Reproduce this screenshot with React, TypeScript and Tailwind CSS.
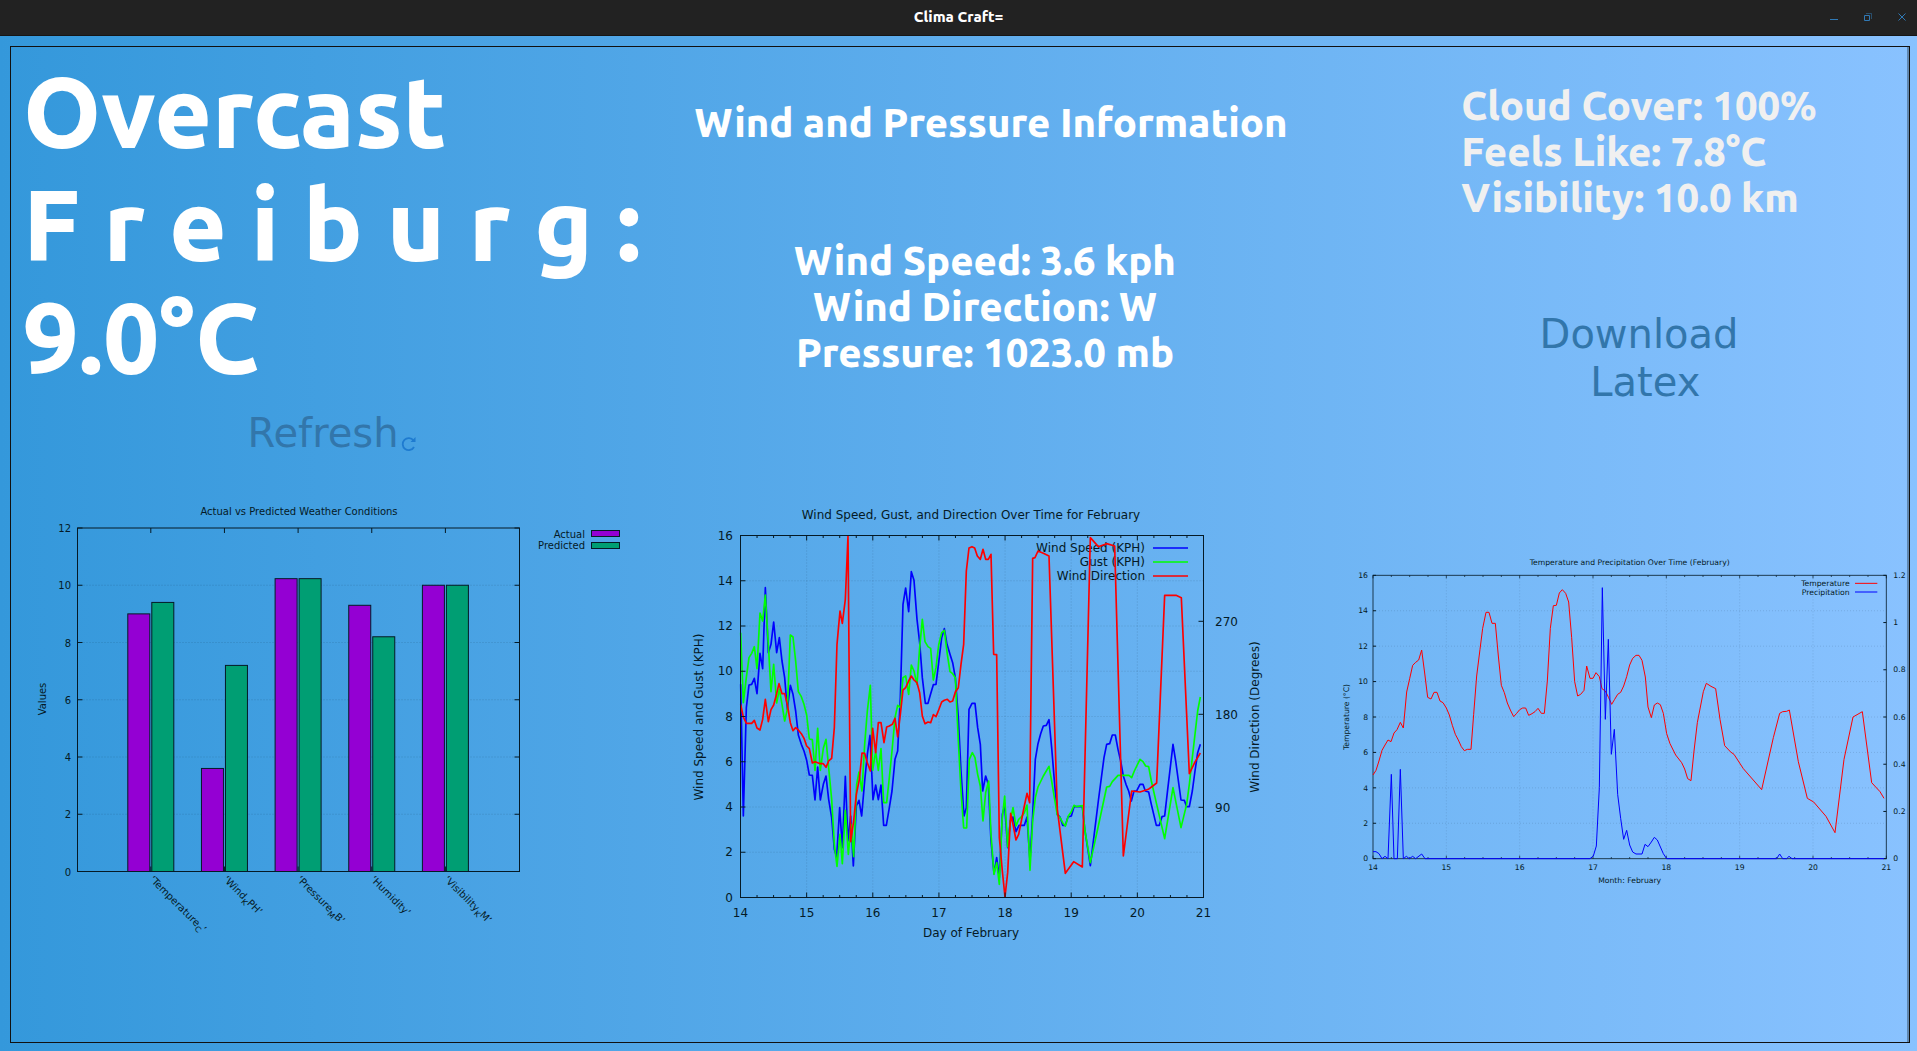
import React from 'react';

const INK = '#051a26';

type LabelProps = {
  x: number;
  y: number;
  size: number;
  anchor?: 'start' | 'middle' | 'end';
  turn?: number;
  children: React.ReactNode;
};

function Label({ x, y, size, anchor = 'middle', turn = 0, children }: LabelProps) {
  return (
    <text
      x={x}
      y={y}
      fontSize={size}
      textAnchor={anchor}
      fill={INK}
      transform={turn ? `rotate(${turn} ${x} ${y})` : undefined}
    >
      {children}
    </text>
  );
}

const range = (n: number) => Array.from({ length: n }, (_, i) => i);

/* ---------- Actual vs predicted bars ---------- */

const bars: { name: React.ReactNode; actual: number; predicted: number }[] = [
  { name: <>‘Temperature<tspan fontSize={8} dy={3}>C</tspan><tspan dy={-3}>’</tspan></>, actual: 9, predicted: 9.4 },
  { name: <>‘Wind<tspan fontSize={8} dy={3}>K</tspan><tspan dy={-3}>PH’</tspan></>, actual: 3.6, predicted: 7.2 },
  { name: <>‘Pressure<tspan fontSize={8} dy={3}>M</tspan><tspan dy={-3}>B’</tspan></>, actual: 10.23, predicted: 10.23 },
  { name: <>‘Humidity’</>, actual: 9.3, predicted: 8.2 },
  { name: <>‘Visibility<tspan fontSize={8} dy={3}>K</tspan><tspan dy={-3}>M’</tspan></>, actual: 10, predicted: 10 },
];

function ConditionsChart() {
  const L = 66.5, R = 508.5, T = 37, B = 380.5;
  const yOf = (v: number) => B - (v * (B - T)) / 12;
  return (
    <svg viewBox="0 0 654 470" className="block w-full" role="img" aria-label="Actual vs Predicted Weather Conditions">
      {range(5).map((i) => (
        <line key={i} x1={L} x2={R} y1={yOf(2 + i * 2)} y2={yOf(2 + i * 2)} stroke={INK} strokeOpacity={0.18} strokeDasharray="1 2" />
      ))}
      {bars.map((b, i) => {
        const c = 139.8 + i * 73.65;
        return (
          <g key={i} stroke={INK}>
            <path d={`M${c} ${T}v5M${c} ${B}v-5`} />
            <rect x={c - 23} y={yOf(b.actual)} width={22} height={B - yOf(b.actual)} fill="#9400d3" />
            <rect x={c + 1} y={yOf(b.predicted)} width={22} height={B - yOf(b.predicted)} fill="#009e73" />
          </g>
        );
      })}
      {bars.map((b, i) => (
        <Label key={i} x={138 + i * 73.65} y={389} size={10} anchor="start" turn={45}>{b.name}</Label>
      ))}
      <rect x={L} y={T} width={R - L} height={B - T} fill="none" stroke={INK} />
      {range(7).map((i) => (
        <g key={i}>
          <path d={`M${L} ${yOf(i * 2)}h5M${R} ${yOf(i * 2)}h-5`} stroke={INK} />
          <Label x={60} y={yOf(i * 2) + 4} size={10} anchor="end">{i * 2}</Label>
        </g>
      ))}
      <Label x={288} y={24} size={10}>Actual vs Predicted Weather Conditions</Label>
      <Label x={35} y={208} size={10} turn={-90}>Values</Label>
      <Label x={574} y={47} size={10} anchor="end">Actual</Label>
      <Label x={574} y={58} size={10} anchor="end">Predicted</Label>
      <rect x={580.5} y={39.5} width={28} height={6} fill="#9400d3" stroke={INK} />
      <rect x={580.5} y={51.5} width={28} height={6} fill="#009e73" stroke={INK} />
    </svg>
  );
}

/* ---------- Wind chart (series are stored at three units per pixel) ---------- */

const windSpeed =
  '182,580 190,975 199,650 207,582 215,580 223,562 231,608 240,487 248,533 256,290 265,485 273,460 281,393 290,485 298,440 306,510 314,560 322,655 331,583 339,610 347,660 355,732 364,760 372,780 380,808 388,852 397,853 405,927 413,828 421,927 430,880 438,855 446,925 455,980 463,1075 470,1098 479,950 487,1070 496,856 504,1050 512,975 520,1125 529,945 537,928 545,975 554,870 562,790 570,733 579,926 587,882 595,926 603,882 611,1003 619,1003 628,950 636,900 645,805 653,780 661,620 669,340 677,291 686,362 694,242 702,268 711,385 719,455 727,560 736,637 744,637 752,608 760,581 768,580 776,515 785,440 793,413 801,460 810,490 818,515 826,560 835,680 843,840 852,975 859,950 867,655 876,637 885,637 893,710 901,760 908,900 917,855 925,880 933,1050 942,1148 950,1100 958,1160 967,970 974,945 983,1070 991,990 999,978 1008,1022 1017,1003 1033,1003 1041,978 1050,1110 1058,970 1066,805 1074,758 1082,728 1090,705 1099,703 1107,686 1115,770 1124,880 1132,970 1140,978 1148,1003 1156,1003 1164,978 1174,975 1182,947 1190,947 1207,947 1215,1020 1231,1124 1255,930 1272,800 1280,760 1289,758 1297,732 1306,732 1314,775 1322,810 1330,855 1338,880 1346,900 1354,930 1362,900 1370,900 1380,880 1389,880 1396,900 1406,903 1414,940 1429,1003 1438,1003 1446,977 1454,975 1462,905 1479,760 1487,810 1503,927 1513,928 1520,947 1528,947 1537,900 1545,840 1553,785 1561,760';
const gust =
  '182,425 190,635 199,560 207,500 215,487 223,467 231,533 240,366 248,390 256,312 265,460 273,602 281,520 290,636 298,595 306,640 314,690 322,655 331,432 339,438 347,510 355,602 364,617 372,640 380,672 388,744 397,746 405,838 413,712 421,838 430,772 438,745 446,830 455,925 463,1060 471,1126 480,1030 487,1118 496,958 505,1090 513,1000 521,1097 530,880 537,843 546,900 554,760 562,660 571,583 578,838 587,782 595,838 603,773 611,935 620,935 628,860 636,780 645,680 653,643 661,650 669,560 677,555 686,610 694,522 702,540 711,580 719,470 727,385 735,452 744,467 752,472 760,567 768,530 776,462 785,425 793,418 802,490 810,542 818,548 826,560 835,750 843,900 851,1011 860,1011 868,805 877,785 885,800 893,850 901,885 909,990 917,905 926,870 933,1030 942,1150 950,1115 958,1180 966,990 974,915 983,1068 991,990 999,950 1008,1005 1016,985 1024,978 1033,965 1041,942 1050,1138 1058,990 1066,920 1074,888 1090,855 1107,826 1115,870 1124,925 1132,972 1140,980 1148,995 1156,1005 1165,975 1174,962 1182,943 1190,947 1207,944 1215,1020 1231,1115 1255,1005 1280,888 1289,886 1297,872 1306,862 1314,853 1347,853 1355,860 1363,840 1380,805 1389,812 1397,825 1406,827 1414,870 1430,940 1454,1043 1479,890 1503,1010 1520,940 1528,880 1537,800 1553,660 1561,618';
const direction =
  '182,640 190,678 199,697 215,697 223,688 231,711 240,717 248,685 256,625 265,692 273,656 281,642 290,608 297,578 306,608 314,608 322,640 331,695 339,719 347,710 355,717 364,728 372,742 380,765 388,773 397,816 405,812 421,818 430,818 438,829 446,810 455,802 463,710 471,460 480,360 487,397 496,325 504,135 508,600 512,1052 521,990 529,910 538,865 546,786 554,787 562,815 571,840 578,712 587,785 595,695 603,695 612,755 620,708 628,705 637,700 645,682 653,738 661,670 669,597 677,590 686,570 694,555 702,567 711,575 719,605 727,675 735,698 744,693 752,695 760,671 768,677 776,657 785,633 793,628 802,625 810,633 818,630 826,603 835,590 843,520 851,460 859,240 867,171 876,167 884,171 892,195 901,205 909,175 917,205 925,205 933,190 941,490 950,491 958,1040 967,1140 975,1218 983,1145 992,967 1000,1005 1008,1047 1016,1030 1024,990 1033,945 1041,907 1049,935 1058,202 1065,200 1074,180 1090,187 1107,195 1132,955 1156,1147 1181,1112 1207,1128 1231,140 1255,167 1280,158 1304,165 1330,1095 1355,900 1380,903 1405,895 1430,876 1454,313 1488,313 1504,320 1528,848 1544,815 1561,786';

function WindChart() {
  const L = 75.5, R = 538.5, T = 44.5, B = 406.5;
  const day = (R - L) / 7;
  const yOf = (v: number) => B - (v * (B - T)) / 16;
  return (
    <svg viewBox="0 0 640 470" className="block w-full" role="img" aria-label="Wind Speed, Gust, and Direction Over Time for February">
      <g stroke={INK} strokeOpacity={0.16} strokeDasharray="1 2">
        {range(7).map((i) => <line key={i} x1={L} x2={R} y1={yOf(2 + i * 2)} y2={yOf(2 + i * 2)} />)}
        {range(6).map((i) => <line key={i} x1={L + (i + 1) * day} x2={L + (i + 1) * day} y1={T} y2={B} />)}
      </g>
      <Label x={480} y={61} size={12} anchor="end">Wind Speed (KPH)</Label>
      <Label x={480} y={75} size={12} anchor="end">Gust (KPH)</Label>
      <Label x={480} y={89} size={12} anchor="end">Wind Direction</Label>
      <g transform="translate(15 0) scale(0.33333)" fill="none" strokeWidth={5} strokeLinejoin="round">
        <polyline points={windSpeed} stroke="#0000ff" />
        <polyline points={gust} stroke="#00ff00" />
        <polyline points={direction} stroke="#ff0000" />
      </g>
      <g strokeWidth={1.6}>
        <line x1={488} x2={523} y1={57} y2={57} stroke="#0000ff" />
        <line x1={488} x2={523} y1={71} y2={71} stroke="#00ff00" />
        <line x1={488} x2={523} y1={85} y2={85} stroke="#ff0000" />
      </g>
      <rect x={L} y={T} width={R - L} height={B - T} fill="none" stroke={INK} />
      {range(9).map((i) => (
        <g key={i}>
          <path d={`M${L} ${yOf(i * 2)}h5`} stroke={INK} />
          <Label x={68} y={yOf(i * 2) + 4} size={12} anchor="end">{i * 2}</Label>
        </g>
      ))}
      {range(29).map((i) => {
        const x = L + (i * day) / 4;
        const h = i % 4 ? 2.5 : 5;
        return <path key={i} d={`M${x} ${T}v${h}M${x} ${B}v${-h}`} stroke={INK} />;
      })}
      {range(8).map((i) => <Label key={i} x={L + i * day} y={426} size={12}>{14 + i}</Label>)}
      {[90, 180, 270].map((d, i) => (
        <g key={d}>
          <path d={`M${R} ${316.3 - i * 93}h-5`} stroke={INK} />
          <Label x={550} y={321 - i * 93} size={12} anchor="start">{d}</Label>
        </g>
      ))}
      <Label x={306} y={28} size={12}>Wind Speed, Gust, and Direction Over Time for February</Label>
      <Label x={306} y={446} size={12}>Day of February</Label>
      <Label x={38} y={226} size={12} turn={-90}>Wind Speed and Gust (KPH)</Label>
      <Label x={594} y={226} size={12} turn={-90}>Wind Direction (Degrees)</Label>
    </svg>
  );
}

/* ---------- Temperature chart (drawn at three units per pixel) ---------- */

const temperature =
  '159,702 168,688 176,663 186,628 195,612 204,597 213,602 222,576 231,566 241,544 250,561 260,453 269,413 278,373 287,364 296,357 305,327 314,396 323,469 333,474 342,454 351,454 360,480 369,485 379,501 388,522 397,553 406,580 415,597 424,617 433,629 442,625 453,625 461,520 470,405 480,325 488,262 498,214 507,214 516,247 526,247 535,345 544,433 553,455 562,486 571,507 581,527 590,517 599,506 608,501 617,501 626,523 636,518 645,512 654,502 664,517 673,517 682,420 691,262 700,194 709,193 718,156 727,146 737,157 746,183 755,290 764,422 773,465 782,460 792,448 800,375 810,412 819,412 828,395 838,407 846,443 856,450 866,470 875,490 884,475 893,460 902,454 911,435 920,407 929,372 938,352 948,343 957,343 966,358 976,408 984,498 994,530 1003,492 1012,486 1021,491 1030,517 1040,578 1050,608 1067,642 1085,665 1094,684 1103,713 1113,719 1122,630 1132,545 1150,452 1159,427 1173,436 1187,443 1200,535 1214,614 1232,633 1242,640 1270,683 1325,746 1360,590 1379,517 1388,512 1400,511 1408,507 1435,662 1462,772 1481,783 1518,826 1545,875 1572,655 1599,528 1627,512 1655,725 1680,752 1692,772';
const precipitation =
  '159,932 168,932 177,938 186,953 195,946 204,953 214,700 222,953 232,953 241,685 250,953 259,946 268,953 278,946 287,953 305,939 315,953 810,953 820,945 829,915 838,740 847,140 856,535 865,295 874,640 883,565 893,760 902,832 911,895 920,868 929,912 938,933 948,939 966,939 975,910 984,917 994,903 1003,889 1012,897 1030,938 1040,953 1370,953 1379,939 1388,953 1400,953 1407,946 1416,953 1692,953';

function TemperatureChart() {
  const L = 204, R = 1744, T = 253, B = 1103;
  const day = (R - L) / 7;
  const yOf = (v: number) => B - (v * (B - T)) / 16;
  return (
    <svg viewBox="0 0 1812 1410" className="block w-full" role="img" aria-label="Temperature and Precipitation Over Time (February)">
      <g stroke={INK} strokeWidth={3}>
        <g strokeOpacity={0.12} strokeDasharray="3 6">
          {range(7).map((i) => <line key={i} x1={L} x2={R} y1={yOf(2 + i * 2)} y2={yOf(2 + i * 2)} />)}
          {range(6).map((i) => <line key={i} x1={L + (i + 1) * day} x2={L + (i + 1) * day} y1={T} y2={B} />)}
        </g>
        <rect x={L} y={T} width={R - L} height={B - T} fill="none" strokeOpacity={0.8} />
        {range(9).map((i) => <path key={i} d={`M${L} ${yOf(i * 2)}h9`} />)}
        {range(7).map((i) => <path key={i} d={`M${R} ${B - (i * (B - T)) / 6}h-9`} />)}
        {range(29).map((i) => {
          const x = L + (i * day) / 4;
          const h = i % 4 ? 5 : 9;
          return <path key={i} d={`M${x} ${T}v${h}M${x} ${B}v${-h}`} strokeOpacity={0.7} />;
        })}
      </g>
      <g transform="translate(45 150)" fill="none" strokeWidth={3} strokeLinejoin="round">
        <polyline points={temperature} stroke="#ff0000" />
        <polyline points={precipitation} stroke="#0000ff" />
      </g>
      <line x1={1650} x2={1717} y1={277} y2={277} stroke="#ff0000" strokeWidth={3} />
      <line x1={1650} x2={1717} y1={303} y2={303} stroke="#0000ff" strokeWidth={3} />
      <Label x={1634} y={285} size={23} anchor="end">Temperature</Label>
      <Label x={1634} y={311} size={23} anchor="end">Precipitation</Label>
      {range(9).map((i) => <Label key={i} x={189} y={yOf(i * 2) + 8} size={23} anchor="end">{i * 2}</Label>)}
      {range(8).map((i) => <Label key={i} x={L + i * day} y={1138} size={23}>{14 + i}</Label>)}
      {['0', '0.2', '0.4', '0.6', '0.8', '1', '1.2'].map((t, i) => (
        <Label key={t} x={1765} y={B - (i * (B - T)) / 6 + 8} size={23} anchor="start">{t}</Label>
      ))}
      <Label x={974} y={223} size={23}>Temperature and Precipitation Over Time (February)</Label>
      <Label x={974} y={1177} size={23}>Month: February</Label>
      <Label x={132} y={678} size={23} turn={-90}>Temperature (°C)</Label>
    </svg>
  );
}

/* ---------- Window ---------- */

function TitleBar() {
  const control = 'flex h-8 w-6 items-center justify-center text-[#3079b5]';
  return (
    <header className="relative flex h-9 shrink-0 items-center justify-center border-b border-[#161616] bg-[#222222]">
      <h1 className="pb-px font-[Ubuntu,'Open_Sans',sans-serif] text-[15px] leading-5 font-extrabold text-white">Clima Craft=</h1>
      <div className="absolute right-[3px] top-px flex gap-2.5">
        <button type="button" aria-label="Minimize" className={control}>
          <svg width="10" height="10" viewBox="0 0 10 10" fill="none" stroke="currentColor"><path d="M1 7.5h8" /></svg>
        </button>
        <button type="button" aria-label="Restore" className={control}>
          <svg width="10" height="10" viewBox="0 0 10 10" fill="none" stroke="currentColor">
            <path d="M1.5 3.5h5v5h-5z" />
            <path d="M3 1.5h5.5v5.500" strokeOpacity={0.5} />
          </svg>
        </button>
        <button type="button" aria-label="Close" className={control}>
          <svg width="10" height="10" viewBox="0 0 10 10" fill="none" stroke="currentColor"><path d="M1.500 1.500l7 7M8.500 1.500l-7 7" /></svg>
        </button>
      </div>
    </header>
  );
}

export default function App() {
  return (
    <div className="flex min-h-screen flex-col bg-linear-to-r/srgb from-[#3498db] to-[#89c2ff] font-['DejaVu_Sans',sans-serif]">
      <TitleBar />
      <main className="mt-[10px] mr-[7px] mb-2 ml-[10px] grid flex-1 grid-cols-[654fr_640fr_604fr] grid-rows-[444px_auto] border border-[#111111] font-[Ubuntu,'Open_Sans',sans-serif] font-extrabold text-white shadow-[inset_-2px_0_0_#5f87b0]">
        <section className="flex flex-col pl-3 pt-2">
          <p className="text-[99px] leading-[113px]">
            Overcast<br />
            <span className="whitespace-nowrap">F r e i b u r g :</span><br />
            9.0°C
          </p>
          <button type="button" className="mt-1.5 mr-6 flex items-end gap-0.5 self-center font-['DejaVu_Sans',sans-serif] text-[40px] leading-[66px] font-normal text-[#3276ab]">
            Refresh
            <svg width="16" height="16" viewBox="0 0 16 16" fill="none" stroke="#1e7bd0" strokeWidth={1.800} className="mb-[14px]">
              <path d="M12.500 4.500A6 6 0 1 0 13 11" />
              <path d="M14.500 1v5h-5z" fill="#1e7bd0" stroke="none" />
            </svg>
          </button>
        </section>
        <section className="flex flex-col items-center">
          <h2 className="mt-[53px] ml-3 text-[40px] leading-[46px] whitespace-nowrap">Wind and Pressure Information</h2>
          <p className="mt-[92px] text-center text-[40px] leading-[46px]">
            Wind Speed: 3.6 kph<br />Wind Direction: W<br />Pressure: 1023.0 mb
          </p>
        </section>
        <section className="flex flex-col items-center pl-16">
          <p className="mt-9 text-[40px] leading-[46px] text-[#f0f0f0]">
            Cloud Cover: 100%<br />Feels Like: 7.8°C<br />Visibility: 10.0 km
          </p>
          <button type="button" className="mt-[89px] font-['DejaVu_Sans',sans-serif] text-[40px] leading-[48px] font-normal text-[#3276ab]">
            Download<br />&nbsp;Latex
          </button>
        </section>
        <div className="font-['DejaVu_Sans',sans-serif] font-normal"><ConditionsChart /></div>
        <div className="font-['DejaVu_Sans',sans-serif] font-normal"><WindChart /></div>
        <div className="font-['DejaVu_Sans',sans-serif] font-normal"><TemperatureChart /></div>
      </main>
    </div>
  );
}
